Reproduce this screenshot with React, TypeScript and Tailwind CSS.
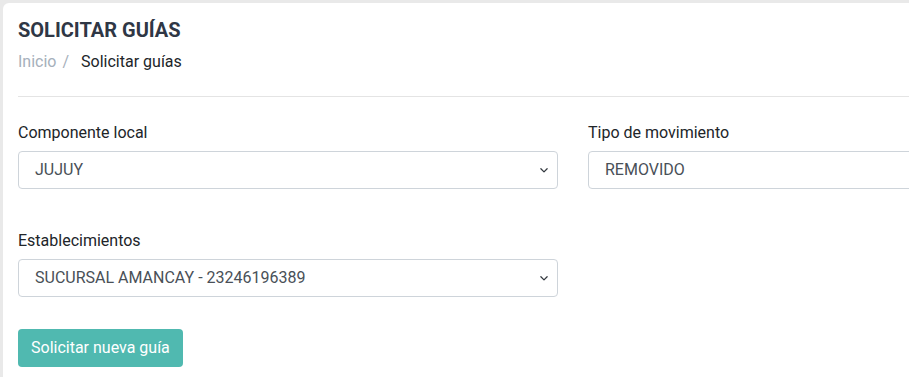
import React from "react";

function Chevron() {
  return (
    <svg width="10" height="10" viewBox="0 0 16 16" className="shrink-0">
      <path d="M3 6l5 5 5-5" fill="none" stroke="#343a40" strokeWidth="2" strokeLinecap="round" strokeLinejoin="round" />
    </svg>
  );
}

function SelectBox({ value }: { value: string }) {
  return (
    <div className="flex h-[38px] w-[540px] items-center justify-between rounded-[4px] border border-[#ced4da] bg-white pl-4 pr-[8px] text-[16px] text-[#495057]">
      <span>{value}</span>
      <Chevron />
    </div>
  );
}

export default function App() {
  return (
    <div className="h-[377px] w-[909px] overflow-hidden bg-[#e9e9e9] pl-[3px] pt-[3px]" style={{ fontFamily: "Roboto, 'Liberation Sans', sans-serif" }}>
      <div className="h-[400px] w-[1200px] rounded-[6px] bg-white px-[15px]">
        <h1 className="pt-[15px] text-[20px] font-bold leading-[24px] text-[#2f3745]">SOLICITAR GUÍAS</h1>
        <div className="mt-[8px] flex text-[16px] leading-[24px]">
          <span className="text-[#a6b0bb]">Inicio</span>
          <span className="pl-[6px] pr-[12px] text-[#a6b0bb]">/</span>
          <span className="text-[#212529]">Solicitar guías</span>
        </div>
        <div className="mt-[22px] h-px w-full bg-[#e4e4e4]" />
        <div className="mt-[24px] grid w-[1110px] grid-cols-[540px_540px] gap-x-[30px] gap-y-[40px]">
          <div>
            <label className="block text-[16px] leading-[24px] text-[#212529]">Componente local</label>
            <div className="mt-[6px]"><SelectBox value="JUJUY" /></div>
          </div>
          <div>
            <label className="block text-[16px] leading-[24px] text-[#212529]">Tipo de movimiento</label>
            <div className="mt-[6px]"><SelectBox value="REMOVIDO" /></div>
          </div>
          <div>
            <label className="block text-[16px] leading-[24px] text-[#212529]">Establecimientos</label>
            <div className="mt-[6px]"><SelectBox value="SUCURSAL AMANCAY - 23246196389" /></div>
          </div>
        </div>
        <button className="mt-[32px] h-[38px] rounded-[4px] bg-[#50b9b0] px-[13px] text-[16px] text-white">Solicitar nueva guía</button>
      </div>
    </div>
  );
}
